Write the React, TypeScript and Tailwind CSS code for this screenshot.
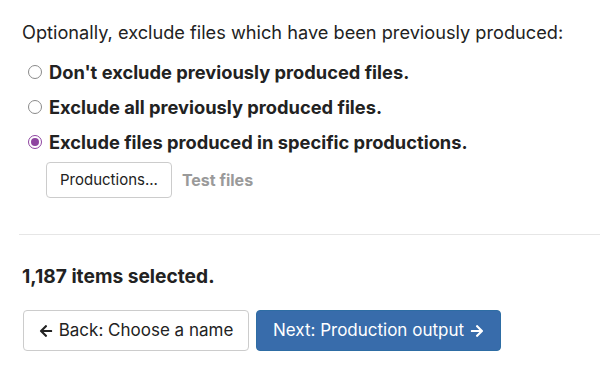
import { FaArrowLeft, FaArrowRight } from "react-icons/fa";

const options = [
  { label: "Don't exclude previously produced files.", checked: false },
  { label: "Exclude all previously produced files.", checked: false },
  { label: "Exclude files produced in specific productions.", checked: true },
];

function Radio({ checked }: { checked: boolean }) {
  return (
    <span
      className={`flex h-[14px] w-[14px] shrink-0 items-center justify-center rounded-full bg-white ${
        checked ? "border-[1.5px] border-[#8e44a0]" : "border border-[#8a8a8a]"
      }`}
    >
      {checked && <span className="h-[8px] w-[8px] rounded-full bg-[#8e44a0]" />}
    </span>
  );
}

export default function App() {
  return (
    <div
      className="h-[368px] w-[600px] overflow-hidden bg-white pt-[20px] text-[#333]"
      style={{ fontFamily: "Inter, 'Liberation Sans', sans-serif" }}
    >
      <p className="pl-[22px] text-[18.2px] leading-[24px] text-[#222]">
        Optionally, exclude files which have been previously produced:
      </p>

      <div className="mt-[16px] flex flex-col gap-[11px] pl-[28px]">
        {options.map((o) => (
          <label key={o.label} className="flex h-[24px] items-center gap-[7px]">
            <Radio checked={o.checked} />
            <span className="text-[18.3px] font-bold leading-[24px] text-[#222]">{o.label}</span>
          </label>
        ))}
      </div>

      <div className="mt-[8px] flex items-center gap-[10px] pl-[46px]">
        <button className="h-[36px] rounded-[4px] border border-[#ccc] bg-white px-[13px] text-[15px] text-[#222]">
          Productions...
        </button>
        <span className="text-[16px] font-bold text-[#9a9a9a]">Test files</span>
      </div>

      <hr className="ml-[19px] mt-[36px] border-t border-[#e6e6e6]" />

      <p className="mt-[29px] pl-[22px] text-[19.2px] font-bold leading-[24px] text-[#222]">
        1,187 items selected.
      </p>

      <div className="mt-[22px] flex gap-[7px] pl-[23px]">
        <button className="flex h-[41px] w-[226px] items-center justify-center gap-[6px] rounded-[4px] border border-[#ccc] bg-white text-[17px] text-[#222]">
          <FaArrowLeft className="h-[14px] w-[14px]" />
          Back: Choose a name
        </button>
        <button className="flex h-[41px] w-[245px] items-center justify-center gap-[6px] rounded-[4px] border border-[#2e6da4] bg-[#386cab] text-[17px] text-white">
          Next: Production output
          <FaArrowRight className="h-[14px] w-[14px]" />
        </button>
      </div>
    </div>
  );
}
